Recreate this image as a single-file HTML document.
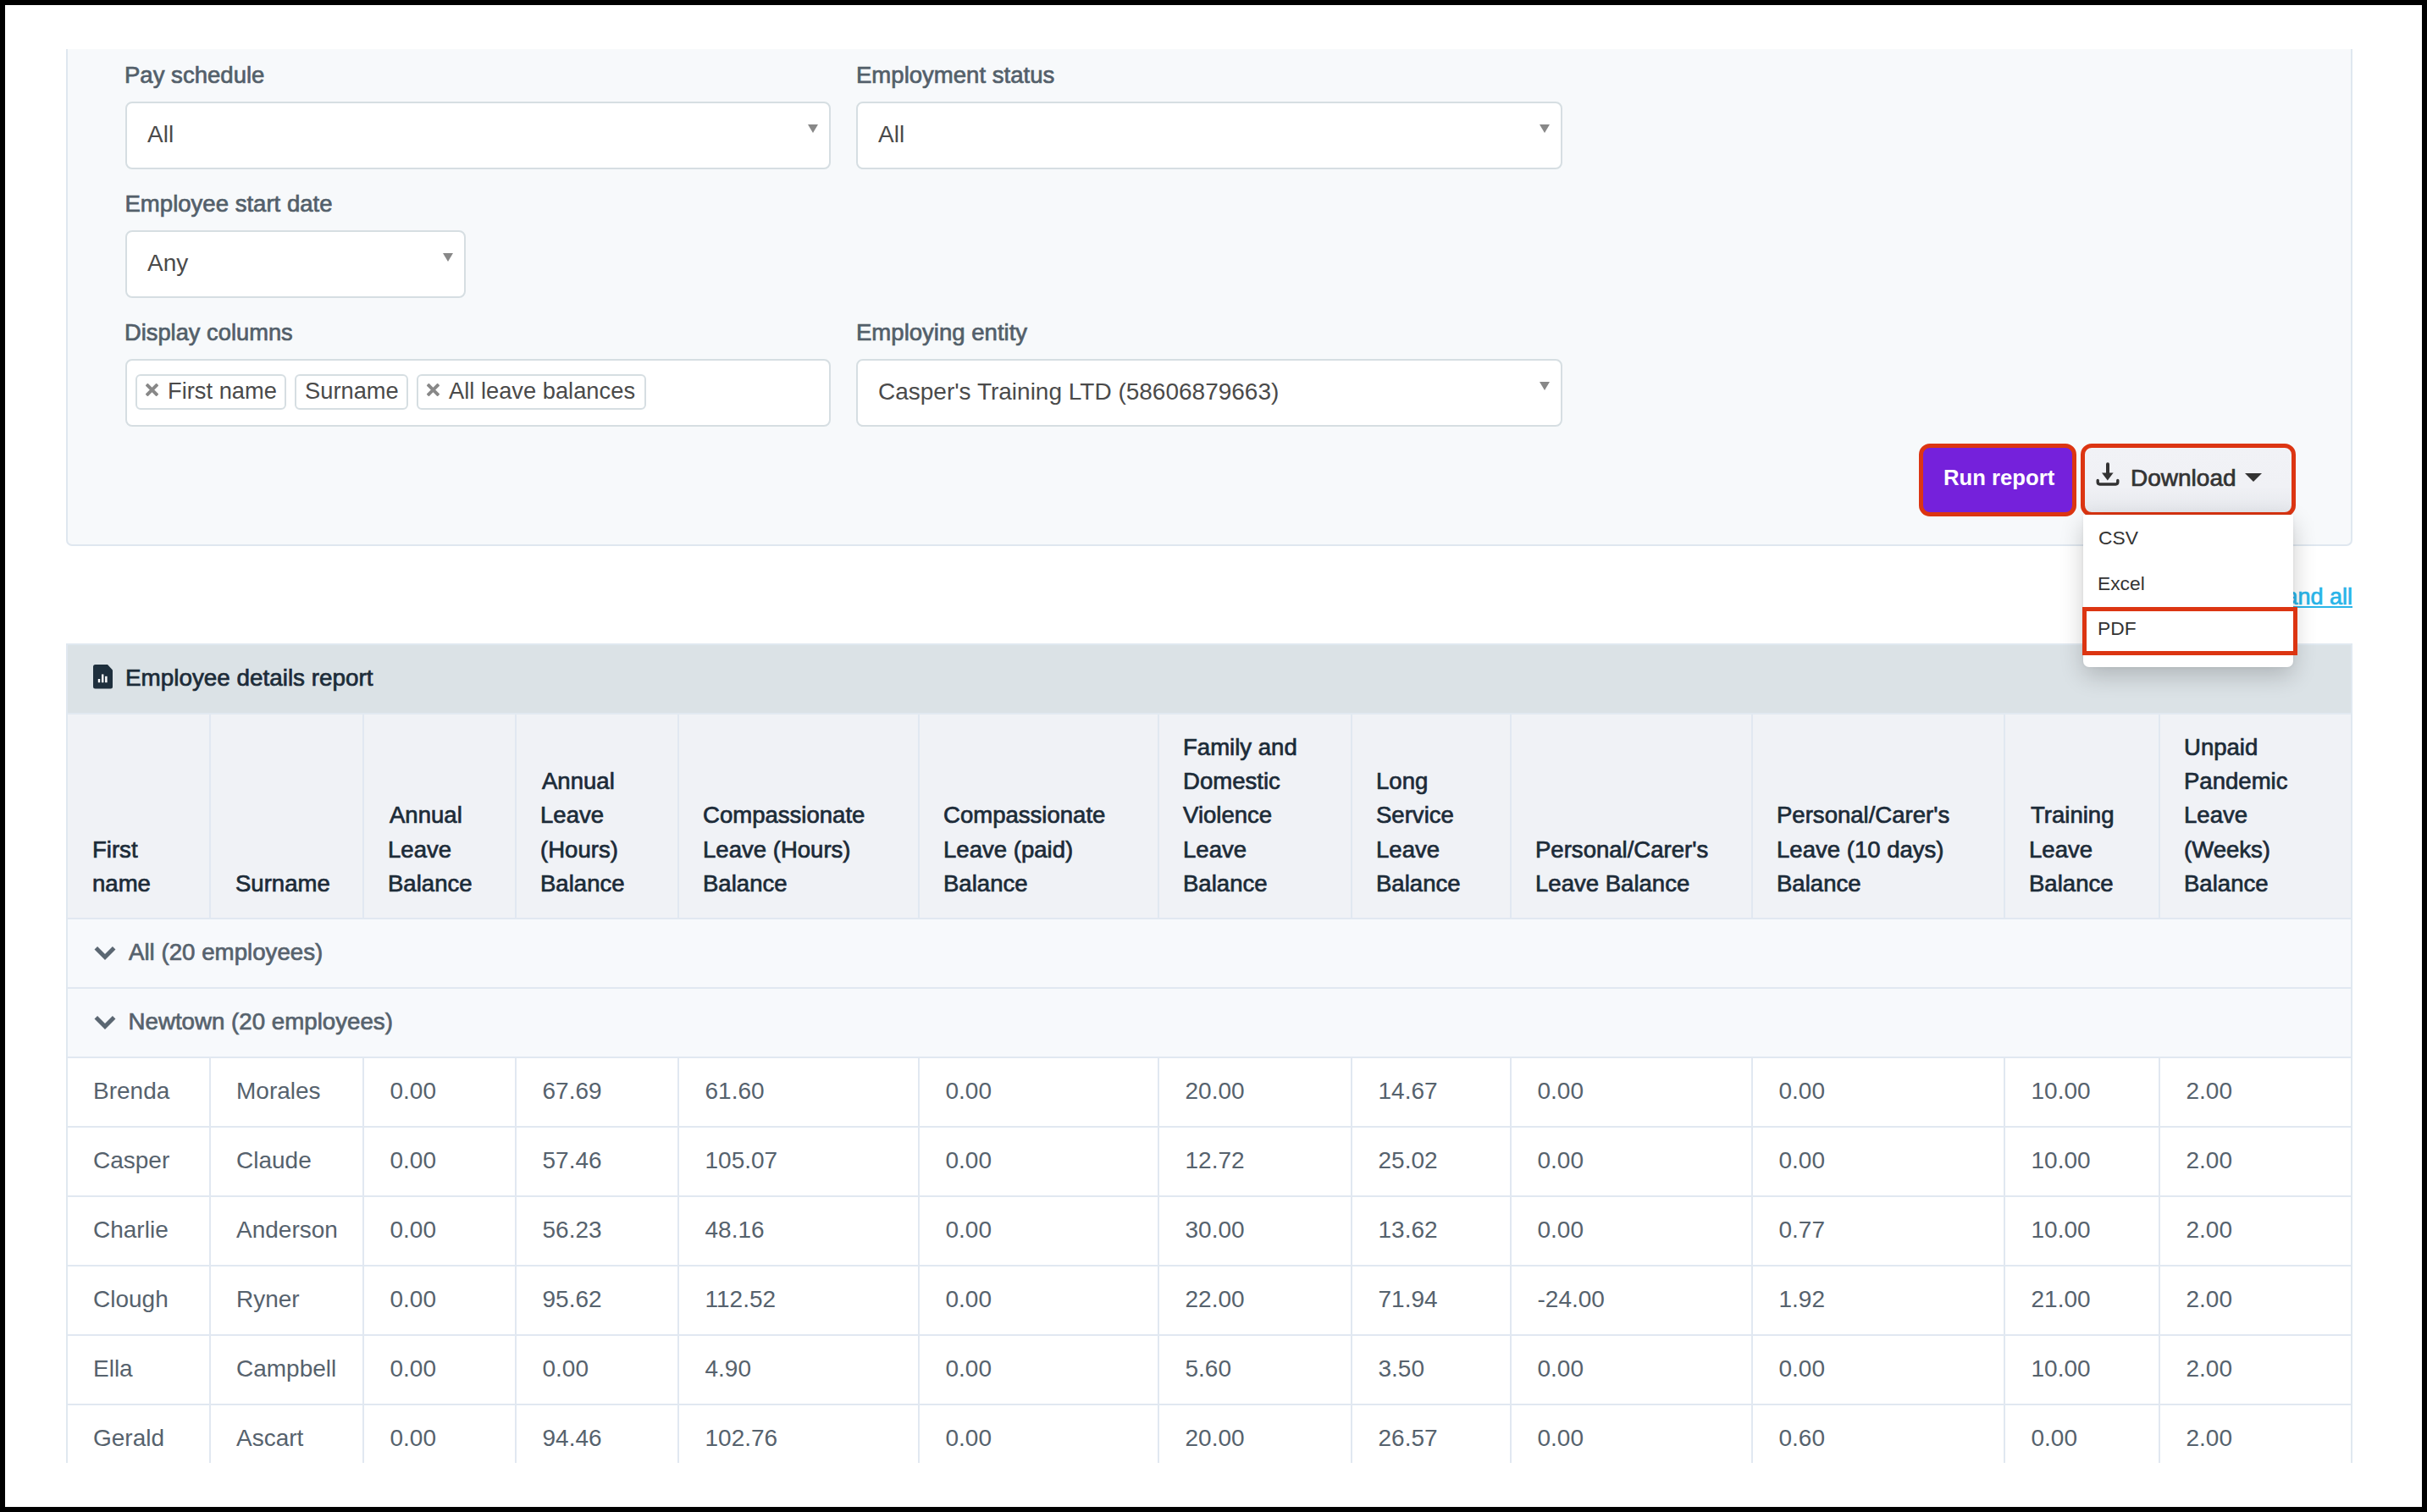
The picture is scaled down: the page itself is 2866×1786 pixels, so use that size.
<!DOCTYPE html>
<html><head><meta charset="utf-8">
<style>
html,body{margin:0;padding:0;}
body{width:2866px;height:1786px;position:relative;overflow:hidden;background:#000;
 font-family:"Liberation Sans",sans-serif;}
.page{position:absolute;left:6px;top:6px;width:2854px;height:1774px;background:#fff;overflow:hidden;}
.abs{position:absolute;box-sizing:border-box;}
.t{position:absolute;white-space:nowrap;}
</style></head><body>
<div class="page"></div>
<div class="abs" style="left:78px;top:58px;width:2700px;height:587px;background:#f7f9fb;border:2px solid #dfe7ef;border-top:none;border-radius:0 0 7px 7px;"></div>
<div class="t" style="left:147px;top:75.17px;font-size:27.55px;line-height:27.55px;color:#535f6a;font-weight:400;-webkit-text-stroke:0.7px #535f6a;">Pay schedule</div>
<div class="abs" style="left:148px;top:120px;width:833px;height:80px;background:#fff;border:2px solid #d6dee2;border-radius:8px;"></div>
<div class="t" style="left:174px;top:144.79px;font-size:28px;line-height:28px;color:#4a4a4a;font-weight:400;">All</div>
<div class="abs" style="left:954px;top:147px;width:0;height:0;border-left:6px solid transparent;border-right:6px solid transparent;border-top:10px solid #888;"></div>
<div class="t" style="left:1011px;top:75.17px;font-size:27.55px;line-height:27.55px;color:#535f6a;font-weight:400;-webkit-text-stroke:0.7px #535f6a;">Employment status</div>
<div class="abs" style="left:1011px;top:120px;width:834px;height:80px;background:#fff;border:2px solid #d6dee2;border-radius:8px;"></div>
<div class="t" style="left:1037px;top:144.79px;font-size:28px;line-height:28px;color:#4a4a4a;font-weight:400;">All</div>
<div class="abs" style="left:1818px;top:147px;width:0;height:0;border-left:6px solid transparent;border-right:6px solid transparent;border-top:10px solid #888;"></div>
<div class="t" style="left:147.5px;top:227.17px;font-size:27.55px;line-height:27.55px;color:#535f6a;font-weight:400;-webkit-text-stroke:0.7px #535f6a;">Employee start date</div>
<div class="abs" style="left:148px;top:272px;width:402px;height:80px;background:#fff;border:2px solid #d6dee2;border-radius:8px;"></div>
<div class="t" style="left:174px;top:296.79px;font-size:28px;line-height:28px;color:#4a4a4a;font-weight:400;">Any</div>
<div class="abs" style="left:523px;top:299px;width:0;height:0;border-left:6px solid transparent;border-right:6px solid transparent;border-top:10px solid #888;"></div>
<div class="t" style="left:147px;top:379.39px;font-size:27.3px;line-height:27.3px;color:#535f6a;font-weight:400;-webkit-text-stroke:0.7px #535f6a;">Display columns</div>
<div class="abs" style="left:148px;top:424px;width:833px;height:80px;background:#fff;border:2px solid #d6dee2;border-radius:8px;"></div>
<div class="abs" style="left:160px;top:442px;width:178px;height:42px;background:#fff;border:2px solid #d6dee2;border-radius:6px;"></div>
<svg class="abs" style="left:172px;top:453px" width="15" height="15" viewBox="0 0 15 15"><path d="M2.4 2.4L12.6 12.6M12.6 2.4L2.4 12.6" stroke="#888" stroke-width="4" stroke-linecap="square"/></svg>
<div class="t" style="left:198px;top:447.89px;font-size:27.3px;line-height:27.3px;color:#4a4a4a;font-weight:400;">First name</div>
<div class="abs" style="left:348px;top:442px;width:134px;height:42px;background:#fff;border:2px solid #d6dee2;border-radius:6px;"></div>
<div class="t" style="left:360px;top:447.89px;font-size:27.3px;line-height:27.3px;color:#4a4a4a;font-weight:400;">Surname</div>
<div class="abs" style="left:492px;top:442px;width:271px;height:42px;background:#fff;border:2px solid #d6dee2;border-radius:6px;"></div>
<svg class="abs" style="left:504px;top:453px" width="15" height="15" viewBox="0 0 15 15"><path d="M2.4 2.4L12.6 12.6M12.6 2.4L2.4 12.6" stroke="#888" stroke-width="4" stroke-linecap="square"/></svg>
<div class="t" style="left:530px;top:447.89px;font-size:27.3px;line-height:27.3px;color:#4a4a4a;font-weight:400;">All leave balances</div>
<div class="t" style="left:1011px;top:379.17px;font-size:27.55px;line-height:27.55px;color:#535f6a;font-weight:400;-webkit-text-stroke:0.7px #535f6a;">Employing entity</div>
<div class="abs" style="left:1011px;top:424px;width:834px;height:80px;background:#fff;border:2px solid #d6dee2;border-radius:8px;"></div>
<div class="t" style="left:1037px;top:448.79px;font-size:28px;line-height:28px;color:#4a4a4a;font-weight:400;">Casper&#39;s Training LTD (58606879663)</div>
<div class="abs" style="left:1818px;top:451px;width:0;height:0;border-left:6px solid transparent;border-right:6px solid transparent;border-top:10px solid #888;"></div>
<div class="abs" style="left:2266px;top:524px;width:186px;height:86px;border:5px solid #dc3512;border-radius:13px;background:#7521db;"></div>
<div class="t" style="left:2295px;top:551.74px;font-size:25.7px;line-height:25.7px;color:#fff;font-weight:700;">Run report</div>
<div class="abs" style="left:2457px;top:524px;width:254px;height:86px;border:5px solid #dc3512;border-radius:13px;background:linear-gradient(#f1f2f6 0%,#f0f1f5 60%,#e6e8ed 100%);"></div>
<svg class="abs" style="left:2474px;top:545px" width="30" height="30" viewBox="0 0 30 30"><path d="M15 3.3 L15 14" stroke="#333" stroke-width="4" stroke-linecap="round" fill="none"/><path d="M8 13.5 L21.6 13.5 L14.8 22.6 Z" fill="#333"/><path d="M3.2 22.5 L3.2 24.6 Q3.2 27 5.6 27 L24.4 27 Q26.8 27 26.8 24.6 L26.8 22.5" stroke="#333" stroke-width="3.4" stroke-linecap="round" fill="none"/></svg>
<div class="t" style="left:2516px;top:550.59px;font-size:28px;line-height:28px;color:#333;font-weight:400;-webkit-text-stroke:0.7px #333;">Download</div>
<div class="abs" style="left:2651px;top:559px;width:0;height:0;border-left:10px solid transparent;border-right:10px solid transparent;border-top:10px solid #333;"></div>
<div class="t" style="left:2646px;top:691.64px;font-size:27px;line-height:27px;color:#29b4e8;font-weight:400;-webkit-text-stroke:0.7px #29b4e8;width:132px;text-align:right;">Expand all</div>
<div class="abs" style="left:2640px;top:716px;width:138px;height:2px;background:#29b4e8;"></div>
<div class="abs" style="left:78px;top:760px;width:2700px;height:968px;border:2px solid #e0e8f0;border-bottom:none;background:#fff;"></div>
<div class="abs" style="left:80px;top:762px;width:2696px;height:80px;background:#dbe2e6;"></div>
<div class="abs" style="left:80px;top:842px;width:2696px;height:2px;background:#e2e9f1;"></div>
<div class="abs" style="left:80px;top:844px;width:2696px;height:240px;background:#f0f2f6;"></div>
<svg class="abs" style="left:110px;top:785px" width="24" height="29" viewBox="0 0 24 29"><path d="M2.5 0 H17 L23 6.5 V26 Q23 28.5 20.5 28.5 H2.5 Q0 28.5 0 26 V2.5 Q0 0 2.5 0 Z" fill="#1e2f3d"/><rect x="5.8" y="17" width="2.4" height="4.2" fill="#fff"/><rect x="10" y="11.5" width="2.4" height="9.7" fill="#fff"/><rect x="14.1" y="13.8" width="2.5" height="7.4" fill="#fff"/></svg>
<div class="t" style="left:148px;top:787.12px;font-size:27.85px;line-height:27.85px;color:#1c2b38;font-weight:400;-webkit-text-stroke:0.7px #1c2b38;">Employee details report</div>
<div class="abs" style="left:80px;top:1086px;width:2696px;height:162px;background:#f7f9fc;"></div>
<div class="abs" style="left:80px;top:1084px;width:2696px;height:2px;background:#e1e8f1;"></div>
<div class="abs" style="left:80px;top:1166px;width:2696px;height:2px;background:#e1e8f1;"></div>
<div class="abs" style="left:80px;top:1248px;width:2696px;height:2px;background:#e1e8f1;"></div>
<div class="abs" style="left:80px;top:1330px;width:2696px;height:2px;background:#e1e8f1;"></div>
<div class="abs" style="left:80px;top:1412px;width:2696px;height:2px;background:#e1e8f1;"></div>
<div class="abs" style="left:80px;top:1494px;width:2696px;height:2px;background:#e1e8f1;"></div>
<div class="abs" style="left:80px;top:1576px;width:2696px;height:2px;background:#e1e8f1;"></div>
<div class="abs" style="left:80px;top:1658px;width:2696px;height:2px;background:#e1e8f1;"></div>
<div class="abs" style="left:247px;top:844px;width:2px;height:240px;background:#e1e8f1;"></div>
<div class="abs" style="left:247px;top:1250px;width:2px;height:478px;background:#e1e8f1;"></div>
<div class="abs" style="left:428px;top:844px;width:2px;height:240px;background:#e1e8f1;"></div>
<div class="abs" style="left:428px;top:1250px;width:2px;height:478px;background:#e1e8f1;"></div>
<div class="abs" style="left:608px;top:844px;width:2px;height:240px;background:#e1e8f1;"></div>
<div class="abs" style="left:608px;top:1250px;width:2px;height:478px;background:#e1e8f1;"></div>
<div class="abs" style="left:800px;top:844px;width:2px;height:240px;background:#e1e8f1;"></div>
<div class="abs" style="left:800px;top:1250px;width:2px;height:478px;background:#e1e8f1;"></div>
<div class="abs" style="left:1084px;top:844px;width:2px;height:240px;background:#e1e8f1;"></div>
<div class="abs" style="left:1084px;top:1250px;width:2px;height:478px;background:#e1e8f1;"></div>
<div class="abs" style="left:1367px;top:844px;width:2px;height:240px;background:#e1e8f1;"></div>
<div class="abs" style="left:1367px;top:1250px;width:2px;height:478px;background:#e1e8f1;"></div>
<div class="abs" style="left:1595px;top:844px;width:2px;height:240px;background:#e1e8f1;"></div>
<div class="abs" style="left:1595px;top:1250px;width:2px;height:478px;background:#e1e8f1;"></div>
<div class="abs" style="left:1783px;top:844px;width:2px;height:240px;background:#e1e8f1;"></div>
<div class="abs" style="left:1783px;top:1250px;width:2px;height:478px;background:#e1e8f1;"></div>
<div class="abs" style="left:2068px;top:844px;width:2px;height:240px;background:#e1e8f1;"></div>
<div class="abs" style="left:2068px;top:1250px;width:2px;height:478px;background:#e1e8f1;"></div>
<div class="abs" style="left:2366px;top:844px;width:2px;height:240px;background:#e1e8f1;"></div>
<div class="abs" style="left:2366px;top:1250px;width:2px;height:478px;background:#e1e8f1;"></div>
<div class="abs" style="left:2549px;top:844px;width:2px;height:240px;background:#e1e8f1;"></div>
<div class="abs" style="left:2549px;top:1250px;width:2px;height:478px;background:#e1e8f1;"></div>
<div class="t" style="left:109px;top:989.57px;font-size:27.55px;line-height:27.55px;color:#1c2b38;font-weight:400;-webkit-text-stroke:0.7px #1c2b38;">First</div>
<div class="t" style="left:109px;top:1029.67px;font-size:27.55px;line-height:27.55px;color:#1c2b38;font-weight:400;-webkit-text-stroke:0.7px #1c2b38;">name</div>
<div class="t" style="left:278px;top:1029.67px;font-size:27.55px;line-height:27.55px;color:#1c2b38;font-weight:400;-webkit-text-stroke:0.7px #1c2b38;">Surname</div>
<div class="t" style="left:460px;top:949.47px;font-size:27.55px;line-height:27.55px;color:#1c2b38;font-weight:400;-webkit-text-stroke:0.7px #1c2b38;">Annual</div>
<div class="t" style="left:458px;top:989.57px;font-size:27.55px;line-height:27.55px;color:#1c2b38;font-weight:400;-webkit-text-stroke:0.7px #1c2b38;">Leave</div>
<div class="t" style="left:458px;top:1029.67px;font-size:27.55px;line-height:27.55px;color:#1c2b38;font-weight:400;-webkit-text-stroke:0.7px #1c2b38;">Balance</div>
<div class="t" style="left:640px;top:909.37px;font-size:27.55px;line-height:27.55px;color:#1c2b38;font-weight:400;-webkit-text-stroke:0.7px #1c2b38;">Annual</div>
<div class="t" style="left:638px;top:949.47px;font-size:27.55px;line-height:27.55px;color:#1c2b38;font-weight:400;-webkit-text-stroke:0.7px #1c2b38;">Leave</div>
<div class="t" style="left:638px;top:989.57px;font-size:27.55px;line-height:27.55px;color:#1c2b38;font-weight:400;-webkit-text-stroke:0.7px #1c2b38;">(Hours)</div>
<div class="t" style="left:638px;top:1029.67px;font-size:27.55px;line-height:27.55px;color:#1c2b38;font-weight:400;-webkit-text-stroke:0.7px #1c2b38;">Balance</div>
<div class="t" style="left:830px;top:949.47px;font-size:27.55px;line-height:27.55px;color:#1c2b38;font-weight:400;-webkit-text-stroke:0.7px #1c2b38;">Compassionate</div>
<div class="t" style="left:830px;top:989.57px;font-size:27.55px;line-height:27.55px;color:#1c2b38;font-weight:400;-webkit-text-stroke:0.7px #1c2b38;">Leave (Hours)</div>
<div class="t" style="left:830px;top:1029.67px;font-size:27.55px;line-height:27.55px;color:#1c2b38;font-weight:400;-webkit-text-stroke:0.7px #1c2b38;">Balance</div>
<div class="t" style="left:1114px;top:949.47px;font-size:27.55px;line-height:27.55px;color:#1c2b38;font-weight:400;-webkit-text-stroke:0.7px #1c2b38;">Compassionate</div>
<div class="t" style="left:1114px;top:989.57px;font-size:27.55px;line-height:27.55px;color:#1c2b38;font-weight:400;-webkit-text-stroke:0.7px #1c2b38;">Leave (paid)</div>
<div class="t" style="left:1114px;top:1029.67px;font-size:27.55px;line-height:27.55px;color:#1c2b38;font-weight:400;-webkit-text-stroke:0.7px #1c2b38;">Balance</div>
<div class="t" style="left:1397px;top:869.27px;font-size:27.55px;line-height:27.55px;color:#1c2b38;font-weight:400;-webkit-text-stroke:0.7px #1c2b38;">Family and</div>
<div class="t" style="left:1397px;top:909.37px;font-size:27.55px;line-height:27.55px;color:#1c2b38;font-weight:400;-webkit-text-stroke:0.7px #1c2b38;">Domestic</div>
<div class="t" style="left:1397px;top:949.47px;font-size:27.55px;line-height:27.55px;color:#1c2b38;font-weight:400;-webkit-text-stroke:0.7px #1c2b38;">Violence</div>
<div class="t" style="left:1397px;top:989.57px;font-size:27.55px;line-height:27.55px;color:#1c2b38;font-weight:400;-webkit-text-stroke:0.7px #1c2b38;">Leave</div>
<div class="t" style="left:1397px;top:1029.67px;font-size:27.55px;line-height:27.55px;color:#1c2b38;font-weight:400;-webkit-text-stroke:0.7px #1c2b38;">Balance</div>
<div class="t" style="left:1625px;top:909.37px;font-size:27.55px;line-height:27.55px;color:#1c2b38;font-weight:400;-webkit-text-stroke:0.7px #1c2b38;">Long</div>
<div class="t" style="left:1625px;top:949.47px;font-size:27.55px;line-height:27.55px;color:#1c2b38;font-weight:400;-webkit-text-stroke:0.7px #1c2b38;">Service</div>
<div class="t" style="left:1625px;top:989.57px;font-size:27.55px;line-height:27.55px;color:#1c2b38;font-weight:400;-webkit-text-stroke:0.7px #1c2b38;">Leave</div>
<div class="t" style="left:1625px;top:1029.67px;font-size:27.55px;line-height:27.55px;color:#1c2b38;font-weight:400;-webkit-text-stroke:0.7px #1c2b38;">Balance</div>
<div class="t" style="left:1813px;top:989.57px;font-size:27.55px;line-height:27.55px;color:#1c2b38;font-weight:400;-webkit-text-stroke:0.7px #1c2b38;">Personal/Carer&#39;s</div>
<div class="t" style="left:1813px;top:1029.67px;font-size:27.55px;line-height:27.55px;color:#1c2b38;font-weight:400;-webkit-text-stroke:0.7px #1c2b38;">Leave Balance</div>
<div class="t" style="left:2098px;top:949.47px;font-size:27.55px;line-height:27.55px;color:#1c2b38;font-weight:400;-webkit-text-stroke:0.7px #1c2b38;">Personal/Carer&#39;s</div>
<div class="t" style="left:2098px;top:989.57px;font-size:27.55px;line-height:27.55px;color:#1c2b38;font-weight:400;-webkit-text-stroke:0.7px #1c2b38;">Leave (10 days)</div>
<div class="t" style="left:2098px;top:1029.67px;font-size:27.55px;line-height:27.55px;color:#1c2b38;font-weight:400;-webkit-text-stroke:0.7px #1c2b38;">Balance</div>
<div class="t" style="left:2398px;top:949.47px;font-size:27.55px;line-height:27.55px;color:#1c2b38;font-weight:400;-webkit-text-stroke:0.7px #1c2b38;">Training</div>
<div class="t" style="left:2396px;top:989.57px;font-size:27.55px;line-height:27.55px;color:#1c2b38;font-weight:400;-webkit-text-stroke:0.7px #1c2b38;">Leave</div>
<div class="t" style="left:2396px;top:1029.67px;font-size:27.55px;line-height:27.55px;color:#1c2b38;font-weight:400;-webkit-text-stroke:0.7px #1c2b38;">Balance</div>
<div class="t" style="left:2579px;top:869.27px;font-size:27.55px;line-height:27.55px;color:#1c2b38;font-weight:400;-webkit-text-stroke:0.7px #1c2b38;">Unpaid</div>
<div class="t" style="left:2579px;top:909.37px;font-size:27.55px;line-height:27.55px;color:#1c2b38;font-weight:400;-webkit-text-stroke:0.7px #1c2b38;">Pandemic</div>
<div class="t" style="left:2579px;top:949.47px;font-size:27.55px;line-height:27.55px;color:#1c2b38;font-weight:400;-webkit-text-stroke:0.7px #1c2b38;">Leave</div>
<div class="t" style="left:2579px;top:989.57px;font-size:27.55px;line-height:27.55px;color:#1c2b38;font-weight:400;-webkit-text-stroke:0.7px #1c2b38;">(Weeks)</div>
<div class="t" style="left:2579px;top:1029.67px;font-size:27.55px;line-height:27.55px;color:#1c2b38;font-weight:400;-webkit-text-stroke:0.7px #1c2b38;">Balance</div>
<svg class="abs" style="left:111px;top:1117px" width="26" height="18" viewBox="0 0 26 18"><path d="M2.3 2.8 L13 13.5 L23.7 2.8" stroke="#5b6772" stroke-width="5" stroke-linecap="butt" stroke-linejoin="miter" fill="none"/></svg>
<div class="t" style="left:152px;top:1111.25px;font-size:27.7px;line-height:27.7px;color:#56626d;font-weight:400;-webkit-text-stroke:0.7px #56626d;">All (20 employees)</div>
<svg class="abs" style="left:111px;top:1199px" width="26" height="18" viewBox="0 0 26 18"><path d="M2.3 2.8 L13 13.5 L23.7 2.8" stroke="#5b6772" stroke-width="5" stroke-linecap="butt" stroke-linejoin="miter" fill="none"/></svg>
<div class="t" style="left:151.5px;top:1193.45px;font-size:27.7px;line-height:27.7px;color:#56626d;font-weight:400;-webkit-text-stroke:0.7px #56626d;">Newtown (20 employees)</div>
<div class="t" style="left:110px;top:1274.59px;font-size:28px;line-height:28px;color:#56626d;font-weight:400;">Brenda</div>
<div class="t" style="left:279px;top:1274.59px;font-size:28px;line-height:28px;color:#56626d;font-weight:400;">Morales</div>
<div class="t" style="left:460.5px;top:1274.59px;font-size:28px;line-height:28px;color:#56626d;font-weight:400;">0.00</div>
<div class="t" style="left:640.5px;top:1274.59px;font-size:28px;line-height:28px;color:#56626d;font-weight:400;">67.69</div>
<div class="t" style="left:832.5px;top:1274.59px;font-size:28px;line-height:28px;color:#56626d;font-weight:400;">61.60</div>
<div class="t" style="left:1116.5px;top:1274.59px;font-size:28px;line-height:28px;color:#56626d;font-weight:400;">0.00</div>
<div class="t" style="left:1399.5px;top:1274.59px;font-size:28px;line-height:28px;color:#56626d;font-weight:400;">20.00</div>
<div class="t" style="left:1627.5px;top:1274.59px;font-size:28px;line-height:28px;color:#56626d;font-weight:400;">14.67</div>
<div class="t" style="left:1815.5px;top:1274.59px;font-size:28px;line-height:28px;color:#56626d;font-weight:400;">0.00</div>
<div class="t" style="left:2100.5px;top:1274.59px;font-size:28px;line-height:28px;color:#56626d;font-weight:400;">0.00</div>
<div class="t" style="left:2398.5px;top:1274.59px;font-size:28px;line-height:28px;color:#56626d;font-weight:400;">10.00</div>
<div class="t" style="left:2581.5px;top:1274.59px;font-size:28px;line-height:28px;color:#56626d;font-weight:400;">2.00</div>
<div class="t" style="left:110px;top:1356.59px;font-size:28px;line-height:28px;color:#56626d;font-weight:400;">Casper</div>
<div class="t" style="left:279px;top:1356.59px;font-size:28px;line-height:28px;color:#56626d;font-weight:400;">Claude</div>
<div class="t" style="left:460.5px;top:1356.59px;font-size:28px;line-height:28px;color:#56626d;font-weight:400;">0.00</div>
<div class="t" style="left:640.5px;top:1356.59px;font-size:28px;line-height:28px;color:#56626d;font-weight:400;">57.46</div>
<div class="t" style="left:832.5px;top:1356.59px;font-size:28px;line-height:28px;color:#56626d;font-weight:400;">105.07</div>
<div class="t" style="left:1116.5px;top:1356.59px;font-size:28px;line-height:28px;color:#56626d;font-weight:400;">0.00</div>
<div class="t" style="left:1399.5px;top:1356.59px;font-size:28px;line-height:28px;color:#56626d;font-weight:400;">12.72</div>
<div class="t" style="left:1627.5px;top:1356.59px;font-size:28px;line-height:28px;color:#56626d;font-weight:400;">25.02</div>
<div class="t" style="left:1815.5px;top:1356.59px;font-size:28px;line-height:28px;color:#56626d;font-weight:400;">0.00</div>
<div class="t" style="left:2100.5px;top:1356.59px;font-size:28px;line-height:28px;color:#56626d;font-weight:400;">0.00</div>
<div class="t" style="left:2398.5px;top:1356.59px;font-size:28px;line-height:28px;color:#56626d;font-weight:400;">10.00</div>
<div class="t" style="left:2581.5px;top:1356.59px;font-size:28px;line-height:28px;color:#56626d;font-weight:400;">2.00</div>
<div class="t" style="left:110px;top:1438.59px;font-size:28px;line-height:28px;color:#56626d;font-weight:400;">Charlie</div>
<div class="t" style="left:279px;top:1438.59px;font-size:28px;line-height:28px;color:#56626d;font-weight:400;">Anderson</div>
<div class="t" style="left:460.5px;top:1438.59px;font-size:28px;line-height:28px;color:#56626d;font-weight:400;">0.00</div>
<div class="t" style="left:640.5px;top:1438.59px;font-size:28px;line-height:28px;color:#56626d;font-weight:400;">56.23</div>
<div class="t" style="left:832.5px;top:1438.59px;font-size:28px;line-height:28px;color:#56626d;font-weight:400;">48.16</div>
<div class="t" style="left:1116.5px;top:1438.59px;font-size:28px;line-height:28px;color:#56626d;font-weight:400;">0.00</div>
<div class="t" style="left:1399.5px;top:1438.59px;font-size:28px;line-height:28px;color:#56626d;font-weight:400;">30.00</div>
<div class="t" style="left:1627.5px;top:1438.59px;font-size:28px;line-height:28px;color:#56626d;font-weight:400;">13.62</div>
<div class="t" style="left:1815.5px;top:1438.59px;font-size:28px;line-height:28px;color:#56626d;font-weight:400;">0.00</div>
<div class="t" style="left:2100.5px;top:1438.59px;font-size:28px;line-height:28px;color:#56626d;font-weight:400;">0.77</div>
<div class="t" style="left:2398.5px;top:1438.59px;font-size:28px;line-height:28px;color:#56626d;font-weight:400;">10.00</div>
<div class="t" style="left:2581.5px;top:1438.59px;font-size:28px;line-height:28px;color:#56626d;font-weight:400;">2.00</div>
<div class="t" style="left:110px;top:1520.59px;font-size:28px;line-height:28px;color:#56626d;font-weight:400;">Clough</div>
<div class="t" style="left:279px;top:1520.59px;font-size:28px;line-height:28px;color:#56626d;font-weight:400;">Ryner</div>
<div class="t" style="left:460.5px;top:1520.59px;font-size:28px;line-height:28px;color:#56626d;font-weight:400;">0.00</div>
<div class="t" style="left:640.5px;top:1520.59px;font-size:28px;line-height:28px;color:#56626d;font-weight:400;">95.62</div>
<div class="t" style="left:832.5px;top:1520.59px;font-size:28px;line-height:28px;color:#56626d;font-weight:400;">112.52</div>
<div class="t" style="left:1116.5px;top:1520.59px;font-size:28px;line-height:28px;color:#56626d;font-weight:400;">0.00</div>
<div class="t" style="left:1399.5px;top:1520.59px;font-size:28px;line-height:28px;color:#56626d;font-weight:400;">22.00</div>
<div class="t" style="left:1627.5px;top:1520.59px;font-size:28px;line-height:28px;color:#56626d;font-weight:400;">71.94</div>
<div class="t" style="left:1815.5px;top:1520.59px;font-size:28px;line-height:28px;color:#56626d;font-weight:400;">-24.00</div>
<div class="t" style="left:2100.5px;top:1520.59px;font-size:28px;line-height:28px;color:#56626d;font-weight:400;">1.92</div>
<div class="t" style="left:2398.5px;top:1520.59px;font-size:28px;line-height:28px;color:#56626d;font-weight:400;">21.00</div>
<div class="t" style="left:2581.5px;top:1520.59px;font-size:28px;line-height:28px;color:#56626d;font-weight:400;">2.00</div>
<div class="t" style="left:110px;top:1602.59px;font-size:28px;line-height:28px;color:#56626d;font-weight:400;">Ella</div>
<div class="t" style="left:279px;top:1602.59px;font-size:28px;line-height:28px;color:#56626d;font-weight:400;">Campbell</div>
<div class="t" style="left:460.5px;top:1602.59px;font-size:28px;line-height:28px;color:#56626d;font-weight:400;">0.00</div>
<div class="t" style="left:640.5px;top:1602.59px;font-size:28px;line-height:28px;color:#56626d;font-weight:400;">0.00</div>
<div class="t" style="left:832.5px;top:1602.59px;font-size:28px;line-height:28px;color:#56626d;font-weight:400;">4.90</div>
<div class="t" style="left:1116.5px;top:1602.59px;font-size:28px;line-height:28px;color:#56626d;font-weight:400;">0.00</div>
<div class="t" style="left:1399.5px;top:1602.59px;font-size:28px;line-height:28px;color:#56626d;font-weight:400;">5.60</div>
<div class="t" style="left:1627.5px;top:1602.59px;font-size:28px;line-height:28px;color:#56626d;font-weight:400;">3.50</div>
<div class="t" style="left:1815.5px;top:1602.59px;font-size:28px;line-height:28px;color:#56626d;font-weight:400;">0.00</div>
<div class="t" style="left:2100.5px;top:1602.59px;font-size:28px;line-height:28px;color:#56626d;font-weight:400;">0.00</div>
<div class="t" style="left:2398.5px;top:1602.59px;font-size:28px;line-height:28px;color:#56626d;font-weight:400;">10.00</div>
<div class="t" style="left:2581.5px;top:1602.59px;font-size:28px;line-height:28px;color:#56626d;font-weight:400;">2.00</div>
<div class="t" style="left:110px;top:1684.59px;font-size:28px;line-height:28px;color:#56626d;font-weight:400;">Gerald</div>
<div class="t" style="left:279px;top:1684.59px;font-size:28px;line-height:28px;color:#56626d;font-weight:400;">Ascart</div>
<div class="t" style="left:460.5px;top:1684.59px;font-size:28px;line-height:28px;color:#56626d;font-weight:400;">0.00</div>
<div class="t" style="left:640.5px;top:1684.59px;font-size:28px;line-height:28px;color:#56626d;font-weight:400;">94.46</div>
<div class="t" style="left:832.5px;top:1684.59px;font-size:28px;line-height:28px;color:#56626d;font-weight:400;">102.76</div>
<div class="t" style="left:1116.5px;top:1684.59px;font-size:28px;line-height:28px;color:#56626d;font-weight:400;">0.00</div>
<div class="t" style="left:1399.5px;top:1684.59px;font-size:28px;line-height:28px;color:#56626d;font-weight:400;">20.00</div>
<div class="t" style="left:1627.5px;top:1684.59px;font-size:28px;line-height:28px;color:#56626d;font-weight:400;">26.57</div>
<div class="t" style="left:1815.5px;top:1684.59px;font-size:28px;line-height:28px;color:#56626d;font-weight:400;">0.00</div>
<div class="t" style="left:2100.5px;top:1684.59px;font-size:28px;line-height:28px;color:#56626d;font-weight:400;">0.60</div>
<div class="t" style="left:2398.5px;top:1684.59px;font-size:28px;line-height:28px;color:#56626d;font-weight:400;">0.00</div>
<div class="t" style="left:2581.5px;top:1684.59px;font-size:28px;line-height:28px;color:#56626d;font-weight:400;">2.00</div>
<div class="abs" style="left:2460px;top:608px;width:248px;height:180px;background:#fff;border-radius:0 0 7px 7px;box-shadow:0 10px 28px rgba(0,0,0,0.20), 0 0 4px rgba(0,0,0,0.06);"></div>
<div class="t" style="left:2478px;top:623.90px;font-size:22.8px;line-height:22.8px;color:#333;font-weight:400;">CSV</div>
<div class="t" style="left:2477px;top:677.90px;font-size:22.8px;line-height:22.8px;color:#333;font-weight:400;">Excel</div>
<div class="t" style="left:2477px;top:731.20px;font-size:22.8px;line-height:22.8px;color:#333;font-weight:400;">PDF</div>
<div class="abs" style="left:2459px;top:717px;width:254px;height:57px;border:5px solid #dc3512;"></div>
</body></html>
